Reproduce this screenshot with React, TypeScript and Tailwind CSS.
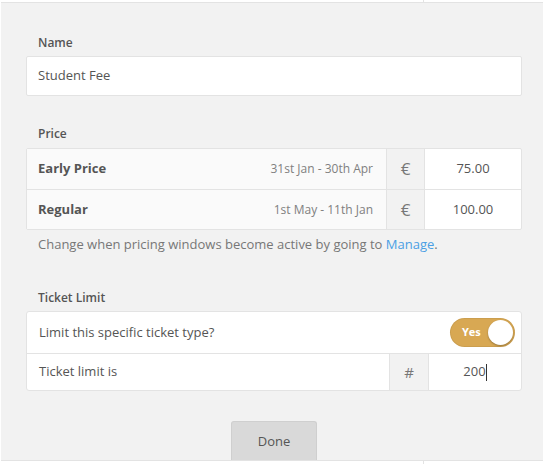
export default function App() {
  return (
    <div
      className="w-[543px] h-[464px] bg-white flex flex-col overflow-hidden text-[#555]"
      style={{ fontFamily: '"Open Sans", "Liberation Sans", sans-serif' }}
    >
      {/* cut-off row above */}
      <div className="h-[2px] flex">
        <div className="w-[424px] border-r border-[#e3e3e3]" />
      </div>

      <div className="flex-1 ml-[1px] bg-[#f2f2f2] border-t border-b border-[#e3e3e3] pl-[25px] pr-[21px] flex flex-col">
        {/* Name */}
        <div className="mt-[32px] pl-[12px] text-[12px] leading-[16px] font-semibold text-[#555]">Name</div>
        <div className="mt-[5px] h-[40px] bg-white border border-[#e3e3e3] rounded-[2px] flex items-center pl-[11px] text-[13px] text-[#555]">
          Student Fee
        </div>

        {/* Price */}
        <div className="mt-[30px] pl-[12px] text-[12px] leading-[16px] font-semibold text-[#555]">Price</div>
        <div className="mt-[6px] border border-[#e3e3e3] rounded-[2px] bg-white">
          {[
            { label: "Early Price", dates: "31st Jan - 30th Apr", value: "75.00" },
            { label: "Regular", dates: "1st May - 11th Jan", value: "100.00" },
          ].map((row, i) => (
            <div
              key={row.label}
              className={`h-[40px] flex ${i > 0 ? "border-t border-[#e3e3e3]" : ""}`}
            >
              <div className="flex-1 bg-[#fafafa] flex items-center justify-between pl-[11px] pr-[13px]">
                <span className="text-[13px] font-bold text-[#555]">{row.label}</span>
                <span className="text-[12px] text-[#808080]">{row.dates}</span>
              </div>
              <div className="w-[39px] bg-[#f2f2f2] border-l border-r border-[#e3e3e3] flex items-center justify-center text-[17px] text-[#777]">
                €
              </div>
              <div className="w-[96px] flex items-center justify-center text-[13px] text-[#555]">
                {row.value}
              </div>
            </div>
          ))}
        </div>
        <div className="mt-[4px] pl-[12px] text-[13px] leading-[20px] text-[#777]">
          Change when pricing windows become active by going to{" "}
          <span className="text-[#4a9fe4]">Manage</span>.
        </div>

        {/* Ticket limit */}
        <div className="mt-[36px] pl-[12px] text-[12px] leading-[16px] font-semibold text-[#555]">Ticket Limit</div>
        <div className="mt-[5px] border border-[#e3e3e3] rounded-[3px] bg-white">
          <div className="h-[41px] flex items-center justify-between pl-[12px] pr-[6px]">
            <span className="text-[13px] text-[#555]">Limit this specific ticket type?</span>
            <div className="w-[65px] h-[29px] rounded-full bg-[#d8a853] flex items-center justify-between pl-[12px] pr-[2px] shadow-[inset_0_0_0_1px_rgba(0,0,0,0.06)]">
              <span className="text-[11px] font-bold text-white">Yes</span>
              <div className="w-[25px] h-[25px] rounded-full bg-white shadow-[0_1px_2px_rgba(0,0,0,0.3)]" />
            </div>
          </div>
          <div className="h-[37px] flex border-t border-[#e3e3e3]">
            <div className="flex-1 flex items-center pl-[12px] text-[13px] text-[#555]">Ticket limit is</div>
            <div className="w-[40px] bg-[#f2f2f2] border-l border-r border-[#e3e3e3] flex items-center justify-center text-[15px] text-[#777]">
              #
            </div>
            <div className="w-[92px] flex items-center justify-center text-[13px] text-[#555]">
              <span>200</span>
              <span className="w-[1px] h-[17px] bg-[#333]" />
            </div>
          </div>
        </div>

        {/* Done */}
        <div className="flex-1 flex items-end justify-center">
          <button className="w-[86px] h-[39px] bg-[#d9d9d9] border border-b-0 border-[#cfcfcf] rounded-t-[3px] text-[13px] text-[#555] pt-[2px]">
            Done
          </button>
        </div>
      </div>

      {/* cut-off row below */}
      <div className="h-[3px] flex">
        <div className="w-[424px] border-r border-[#e3e3e3]" />
      </div>
    </div>
  );
}
